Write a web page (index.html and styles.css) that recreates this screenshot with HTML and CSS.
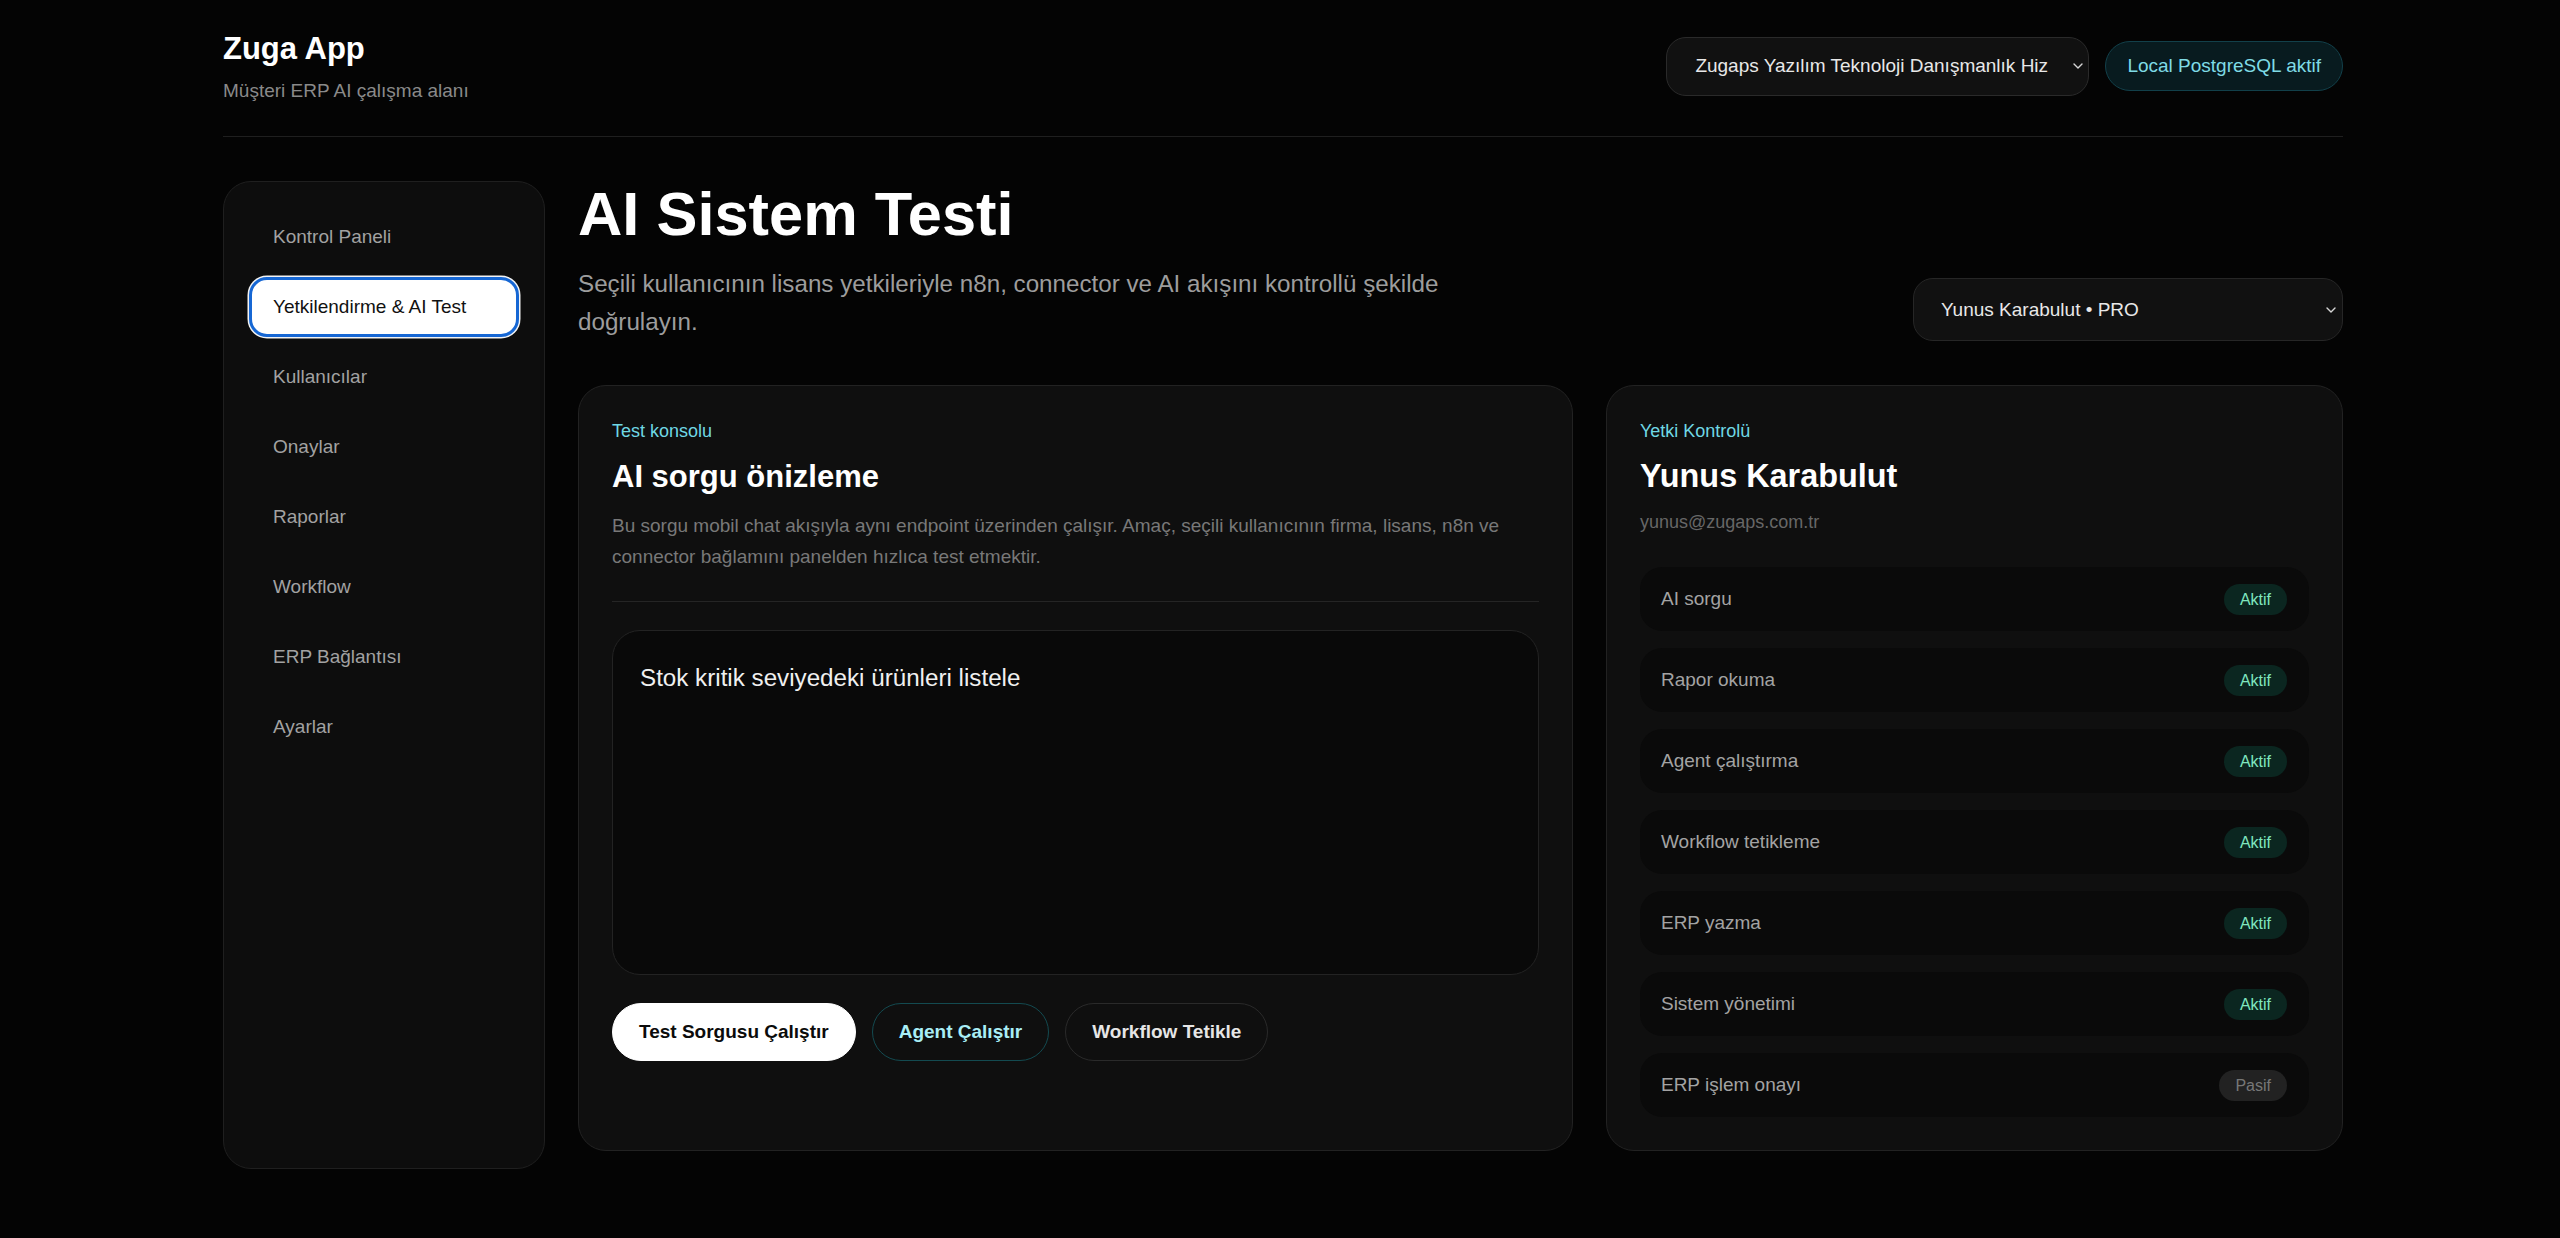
FILE: index.html
```html
<!DOCTYPE html>
<html lang="tr">
<head>
<meta charset="utf-8">
<title>Zuga App</title>
<link rel="stylesheet" href="styles.css">
</head>
<body>
<div class="app">
  <header class="topbar">
    <div class="brand">
      <div class="brand-title">Zuga App</div>
      <div class="brand-sub">Müşteri ERP AI çalışma alanı</div>
    </div>
    <div class="topbar-right">
      <div class="select company-select">
        <span class="select-text">Zugaps Yazılım Teknoloji Danışmanlık Hiz</span>
        <svg class="chev" width="10" height="6" viewBox="0 0 10 6"><path d="M1 1l4 4 4-4" fill="none" stroke="#d6d6d6" stroke-width="1.4" stroke-linecap="round" stroke-linejoin="round"/></svg>
      </div>
      <div class="db-badge">Local PostgreSQL aktif</div>
    </div>
  </header>

  <div class="layout">
    <nav class="sidebar">
      <div class="nav-item">Kontrol Paneli</div>
      <div class="nav-item active">Yetkilendirme &amp; AI Test</div>
      <div class="nav-item">Kullanıcılar</div>
      <div class="nav-item">Onaylar</div>
      <div class="nav-item">Raporlar</div>
      <div class="nav-item">Workflow</div>
      <div class="nav-item">ERP Bağlantısı</div>
      <div class="nav-item">Ayarlar</div>
    </nav>

    <main class="main">
      <div class="page-head">
        <div class="page-intro">
          <h1 class="page-title">AI Sistem Testi</h1>
          <p class="page-desc">Seçili kullanıcının lisans yetkileriyle n8n, connector ve AI akışını kontrollü şekilde doğrulayın.</p>
        </div>
        <div class="select user-select">
          <span class="select-text">Yunus Karabulut • PRO</span>
          <svg class="chev" width="10" height="6" viewBox="0 0 10 6"><path d="M1 1l4 4 4-4" fill="none" stroke="#d6d6d6" stroke-width="1.4" stroke-linecap="round" stroke-linejoin="round"/></svg>
        </div>
      </div>

      <div class="cards">
        <section class="card console">
          <div class="card-head">
            <div class="eyebrow">Test konsolu</div>
            <h2 class="card-title">AI sorgu önizleme</h2>
            <p class="card-desc">Bu sorgu mobil chat akışıyla aynı endpoint üzerinden çalışır. Amaç, seçili kullanıcının firma, lisans, n8n ve connector bağlamını panelden hızlıca test etmektir.</p>
          </div>
          <div class="query-box">Stok kritik seviyedeki ürünleri listele</div>
          <div class="actions">
            <button class="btn btn-primary">Test Sorgusu Çalıştır</button>
            <button class="btn btn-teal">Agent Çalıştır</button>
            <button class="btn btn-ghost">Workflow Tetikle</button>
          </div>
        </section>

        <section class="card perms">
          <div class="eyebrow">Yetki Kontrolü</div>
          <h2 class="card-title user-name">Yunus Karabulut</h2>
          <div class="email">yunus@zugaps.com.tr</div>
          <div class="perm-list">
            <div class="perm-row"><span>AI sorgu</span><span class="tag on">Aktif</span></div>
            <div class="perm-row"><span>Rapor okuma</span><span class="tag on">Aktif</span></div>
            <div class="perm-row"><span>Agent çalıştırma</span><span class="tag on">Aktif</span></div>
            <div class="perm-row"><span>Workflow tetikleme</span><span class="tag on">Aktif</span></div>
            <div class="perm-row"><span>ERP yazma</span><span class="tag on">Aktif</span></div>
            <div class="perm-row"><span>Sistem yönetimi</span><span class="tag on">Aktif</span></div>
            <div class="perm-row"><span>ERP işlem onayı</span><span class="tag off">Pasif</span></div>
          </div>
        </section>
      </div>
    </main>
  </div>
</div>
</body>
</html>
```

FILE: styles.css
```css
* { box-sizing: border-box; }
html, body { margin: 0; padding: 0; }
body {
  background: #040404;
  color: #f2f2f2;
  font-family: "Liberation Sans", Arial, sans-serif;
  font-size: 19px;
}
.app {
  width: 2120px;
  margin: 0 0 0 223px;
}
.topbar {
  display: flex;
  justify-content: space-between;
  align-items: center;
  padding: 31px 0 32px;
  border-bottom: 1px solid #1f1f1f;
}
.brand-title {
  font-size: 31px;
  line-height: 36px;
  font-weight: 700;
  color: #fff;
}
.brand-sub {
  margin-top: 10px;
  font-size: 19px;
  line-height: 27px;
  color: #8a8a8a;
}
.topbar-right {
  display: flex;
  align-items: center;
  gap: 16px;
  margin-top: -3px;
}
.select {
  display: flex;
  align-items: center;
  background: #111;
  border: 1px solid #2a2a2a;
  border-radius: 20px;
  color: #e8e8e8;
  font-size: 19px;
  white-space: nowrap;
  overflow: hidden;
}
.select .select-text { flex: 1; overflow: hidden; }
.select .chev { flex: none; }
.company-select {
  width: 423px;
  height: 59px;
  padding: 0 5px 0 28px;
}
.db-badge {
  height: 50px;
  line-height: 48px;
  padding: 0 21px;
  border-radius: 25px;
  background: #081b1f;
  border: 1px solid #12404a;
  color: #7fdbe6;
  font-size: 19px;
}
.layout {
  display: grid;
  grid-template-columns: 322px minmax(0, 1fr);
  column-gap: 33px;
  align-items: start;
  margin-top: 44px;
}
.sidebar {
  min-height: 988px;
  background: #0d0d0d;
  border: 1px solid #1f1f1f;
  border-radius: 28px;
  padding: 25px;
  display: flex;
  flex-direction: column;
  gap: 10px;
}
.nav-item {
  height: 60px;
  display: flex;
  align-items: center;
  padding-left: 24px;
  border-radius: 18px;
  color: #a2a2a2;
  font-size: 19px;
}
.nav-item.active {
  background: #fff;
  color: #111;
  border: 3px solid #1667d4;
  padding-left: 21px;
  box-shadow: 0 0 0 1.5px #f4f4f4;
}
.page-head {
  display: flex;
  justify-content: space-between;
  align-items: flex-end;
}
.page-title {
  margin: 0;
  font-size: 61.4px;
  line-height: 66px;
  font-weight: 700;
  color: #fff;
}
.page-desc {
  margin: 18px 0 0;
  max-width: 920px;
  font-size: 24.2px;
  line-height: 38px;
  color: #9d9d9d;
}
.user-select {
  width: 430px;
  height: 63px;
  padding: 0 6px 0 27px;
  border-color: #262626;
}
.cards {
  display: grid;
  grid-template-columns: minmax(0, 1.35fr) minmax(0, 1fr);
  column-gap: 33px;
  margin-top: 44px;
}
.card {
  background: #0f0f0f;
  border: 1px solid #222;
  border-radius: 28px;
  padding: 33px;
}
.eyebrow {
  font-size: 18px;
  line-height: 24px;
  color: #6fd8e4;
}
.card-title {
  margin: 15px 0 0;
  font-size: 31px;
  line-height: 37px;
  font-weight: 700;
  color: #fff;
}
.card-title.user-name {
  font-size: 32.4px;
}
.card-head {
  padding-bottom: 29px;
  border-bottom: 1px solid #252525;
}
.card-desc {
  margin: 15px 0 0;
  font-size: 19px;
  line-height: 31px;
  color: #787878;
}
.query-box {
  margin-top: 28px;
  height: 345px;
  background: #090909;
  border: 1px solid #232323;
  border-radius: 28px;
  padding: 29px 27px;
  font-size: 24.2px;
  line-height: 36px;
  color: #f0f0f0;
}
.actions {
  display: flex;
  gap: 16px;
  margin-top: 28px;
}
.btn {
  height: 58px;
  padding: 0 26px;
  border-radius: 29px;
  font-family: "Liberation Sans", Arial, sans-serif;
  font-size: 19px;
  font-weight: 700;
  border: 1px solid transparent;
  background: transparent;
}
.btn-primary {
  background: #fff;
  color: #0b0b0b;
  border-color: #fff;
}
.btn-teal {
  border-color: #134a50;
  color: #a9eef6;
}
.btn-ghost {
  border-color: #2a2a2a;
  color: #e6e6e6;
}
.email {
  margin-top: 14px;
  font-size: 18px;
  line-height: 26px;
  color: #676767;
}
.perm-list {
  margin-top: 32px;
  display: flex;
  flex-direction: column;
  gap: 17px;
}
.perm-row {
  height: 64px;
  display: flex;
  align-items: center;
  justify-content: space-between;
  padding: 0 22px 0 21px;
  background: #0a0a0a;
  border-radius: 22px;
  font-size: 19px;
  color: #a3a3a3;
}
.tag {
  height: 31px;
  line-height: 31px;
  padding: 0 16px;
  border-radius: 16px;
  font-size: 16px;
}
.tag.on {
  background: #0b2620;
  color: #7fe6bf;
}
.tag.off {
  background: #222;
  color: #777;
}
```
